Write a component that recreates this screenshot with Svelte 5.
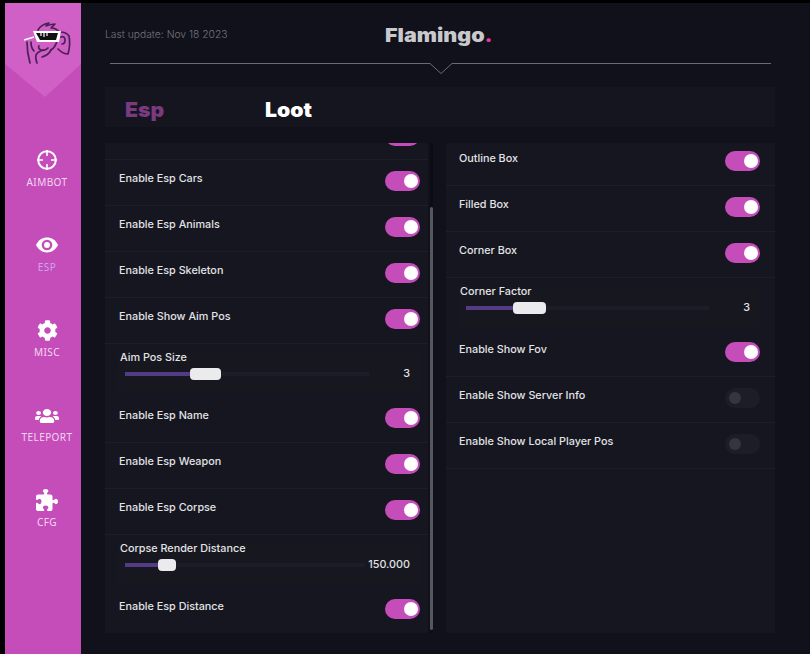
<script>
  const nav = [
    { id: 'aim', label: 'AIMBOT' },
    { id: 'eye', label: 'ESP', active: true },
    { id: 'cog', label: 'MISC' },
    { id: 'users', label: 'TELEPORT' },
    { id: 'puzzle', label: 'CFG' }
  ];
  const left = [
    { partial: true },
    { label: 'Enable Esp Cars', on: true },
    { label: 'Enable Esp Animals', on: true },
    { label: 'Enable Esp Skeleton', on: true },
    { label: 'Enable Show Aim Pos', on: true },
    { slider: true, label: 'Aim Pos Size', value: '3', thumbLeft: 65, thumbW: 31 },
    { label: 'Enable Esp Name', on: true },
    { label: 'Enable Esp Weapon', on: true },
    { label: 'Enable Esp Corpse', on: true },
    { slider: true, label: 'Corpse Render Distance', value: '150.000', thumbLeft: 33, thumbW: 18 },
    { label: 'Enable Esp Distance', on: true, last: true }
  ];
  const right = [
    { label: 'Outline Box', on: true },
    { label: 'Filled Box', on: true },
    { label: 'Corner Box', on: true },
    { slider: true, label: 'Corner Factor', value: '3', thumbLeft: 47, thumbW: 33 },
    { label: 'Enable Show Fov', on: true },
    { label: 'Enable Show Server Info', on: false },
    { label: 'Enable Show Local Player Pos', on: false }
  ];
</script>

{#snippet rowItem(r)}
  {#if r.partial}
    <div class="row partial"><span class="toggle on"><i></i></span></div>
  {:else if r.slider}
    <div class="sliderRow">
      <div class="sliderBox">
        <div class="sliderLabel">{r.label}</div>
        <div class="sliderLine">
          <div class="track">
            <div class="fill" style="width:{r.thumbLeft + 4}px"></div>
            <div class="thumb" style="left:{r.thumbLeft}px;width:{r.thumbW}px"></div>
          </div>
          <span class="value">{r.value}</span>
        </div>
      </div>
    </div>
  {:else}
    <div class="row" class:last={r.last}>
      <span class="label">{r.label}</span>
      <span class="toggle" class:on={r.on}><i></i></span>
    </div>
  {/if}
{/snippet}

<div class="window">
  <aside class="sidebar">
    <div class="logo">
      <svg class="banner" width="76" height="94" viewBox="0 0 76 94"><polygon points="0,0 76,0 76,61 40,94 0,61" fill="#d05fc6"/></svg>
      <svg class="face" width="76" height="70" viewBox="0 0 76 70" fill="none">
        <g stroke="#4b2157" stroke-width="1.7" stroke-linecap="round" stroke-linejoin="round">
          <path d="M33 27c2-4 6-6 11-7l-3 3c3-1 6-2 9-2l-4 4c4 0 7 2 9 5"/>
          <path d="M22 39c0 7 1 14 3 21"/>
          <path d="M26 39c0 4 1 7 3 9"/>
          <path d="M55 29c3 0 7 1 9 4 1 5 1 11-1 18-3 0-7-2-10-5"/>
          <path d="M56 34c2-1 4 0 4 3 0 3-1 4-3 4"/>
          <path d="M52 38c-1 4-3 7-6 9"/>
          <path d="M34 43c-1 2 0 3 2 4 3 1 5 0 7-2"/>
          <path d="M38 47c-3 1-6 3-7 5-1 3 0 5 1 8"/>
          <path d="M46 47c-2 4-5 6-9 7"/>
        </g>
        <path d="M19 37l10-3" stroke="#fff" stroke-width="1.5"/>
        <polygon points="28,28 56,28 54,39 32,39" fill="#fff"/>
        <polygon points="31,30 53,30 51,37 35,37" fill="#111"/>
        <path d="M36 30v3M39 30v4M42 30v3" stroke="#fff" stroke-width="1.2"/>
      </svg>
    </div>
    <nav>
      {#each nav as n}
        <div class="navItem" class:active={n.active}>
          <div class="icon">
            {#if n.id === 'aim'}
              <svg width="22" height="22" viewBox="0 0 22 22" fill="none" stroke="#fff">
                <circle cx="11" cy="11" r="8.8" stroke-width="2"/>
                <path d="M11 1v6M11 15v6M1 11h6M15 11h6" stroke-width="1.6"/>
              </svg>
            {:else if n.id === 'eye'}
              <svg width="22" height="16" viewBox="0 0 22 16">
                <path fill="#fff" d="M0 8C2.500 3 6.500 .6 11 .6S19.500 3 22 8c-2.500 5-6.500 7.400-11 7.400S2.500 13 0 8z"/>
                <circle cx="11" cy="8" r="5.300" fill="#c44dba"/>
                <circle cx="11" cy="8" r="3" fill="#fff"/>
              </svg>
            {:else if n.id === 'cog'}
              <svg width="21" height="21" viewBox="0 0 512 512"><path fill="#fff" d="M487.4 315.7l-42.6-24.6c4.3-23.2 4.3-47 0-70.2l42.6-24.6c4.9-2.8 7.1-8.6 5.5-14-11.1-35.6-30-67.8-54.7-94.6-3.8-4.1-10-5.1-14.8-2.3L380.8 110c-17.9-15.4-38.5-27.3-60.8-35.1V25.8c0-5.6-3.9-10.5-9.4-11.7-36.7-8.2-74.3-7.8-109.2 0-5.5 1.2-9.4 6.1-9.4 11.7V75c-22.2 7.9-42.8 19.8-60.8 35.1L88.7 85.5c-4.9-2.8-11-1.9-14.8 2.3-24.7 26.7-43.6 58.9-54.7 94.6-1.7 5.4.6 11.2 5.5 14L67.3 221c-4.3 23.2-4.3 47 0 70.2l-42.6 24.6c-4.9 2.8-7.1 8.6-5.5 14 11.1 35.6 30 67.8 54.7 94.6 3.8 4.1 10 5.1 14.8 2.3l42.6-24.6c17.9 15.4 38.5 27.3 60.8 35.1v49.2c0 5.6 3.9 10.5 9.4 11.7 36.7 8.2 74.3 7.8 109.2 0 5.5-1.2 9.4-6.1 9.4-11.7v-49.2c22.2-7.9 42.8-19.8 60.8-35.1l42.6 24.6c4.9 2.8 11 1.9 14.8-2.3 24.7-26.7 43.6-58.9 54.7-94.6 1.5-5.500-.7-11.300-5.600-14.100zM256 336c-44.100 0-80-35.900-80-80s35.900-80 80-80 80 35.900 80 80-35.900 80-80 80z"/></svg>
            {:else if n.id === 'users'}
              <svg class="usersIcon" width="24" height="16" viewBox="0 0 640 512" preserveAspectRatio="none"><path fill="#fff" d="M96 224c35.300 0 64-28.700 64-64s-28.700-64-64-64-64 28.700-64 64 28.700 64 64 64zm448 0c35.300 0 64-28.700 64-64s-28.700-64-64-64-64 28.700-64 64 28.700 64 64 64zm32 32h-64c-17.600 0-33.500 7.100-45.100 18.600 40.300 22.100 68.900 62 75.100 109.400h66c17.700 0 32-14.300 32-32v-32c0-35.300-28.700-64-64-64zm-256 0c61.900 0 112-50.100 112-112S381.900 32 320 32 208 82.100 208 144s50.100 112 112 112zm76.800 32h-8.300c-20.800 10-43.900 16-68.500 16s-47.600-6-68.500-16h-8.300C179.600 288 128 339.600 128 403.200V432c0 26.500 21.500 48 48 48h288c26.500 0 48-21.500 48-48v-28.800c0-63.600-51.600-115.200-115.200-115.200zm-223.700-13.400C161.500 263.100 145.600 256 128 256H64c-35.300 0-64 28.700-64 64v32c0 17.700 14.300 32 32 32h65.900c6.300-47.400 34.900-87.300 75.200-109.400z"/></svg>
            {:else}
              <svg width="22" height="22" viewBox="0 0 512 512"><path fill="#fff" d="M192 104.8c0-9.2-5.8-17.3-13.200-22.800C167.200 73.300 160 61.300 160 48c0-26.500 28.700-48 64-48s64 21.500 64 48c0 13.300-7.200 25.300-18.800 34-7.400 5.500-13.200 13.600-13.200 22.800 0 12.800 10.400 23.200 23.200 23.200H336c26.500 0 48 21.500 48 48v56.800c0 12.800 10.400 23.200 23.200 23.200 9.200 0 17.300-5.800 22.800-13.200 8.700-11.600 20.700-18.800 34-18.800 26.500 0 48 28.700 48 64s-21.500 64-48 64c-13.300 0-25.300-7.200-34-18.800-5.500-7.400-13.600-13.200-22.800-13.200-12.800 0-23.200 10.400-23.200 23.200V464c0 26.500-21.500 48-48 48H279.200c-12.800 0-23.200-10.400-23.200-23.200 0-9.200 5.800-17.300 13.200-22.800 11.600-8.700 18.800-20.700 18.800-34 0-26.500-28.700-48-64-48s-64 21.500-64 48c0 13.300 7.200 25.300 18.800 34 7.400 5.500 13.200 13.600 13.200 22.800 0 12.800-10.400 23.200-23.200 23.200H48c-26.500 0-48-21.500-48-48V343.200C0 330.400 10.400 320 23.200 320c9.200 0 17.300 5.800 22.800 13.200 8.700 11.600 20.700 18.800 34 18.800 26.500 0 48-28.700 48-64s-21.500-64-48-64c-13.300 0-25.300 7.200-34 18.800-5.500 7.400-13.600 13.200-22.800 13.200C10.400 256 0 245.600 0 232.800V176c0-26.500 21.500-48 48-48h120.800c12.800 0 23.200-10.400 23.200-23.200z"/></svg>
            {/if}
          </div>
          <div class="navLabel">{n.label}</div>
        </div>
      {/each}
    </nav>
  </aside>

  <main>
    <header>
      <span class="update">Last update: Nov 18 2023</span>
      <span class="brand">Flamingo<b>.</b></span>
    </header>
    <svg class="rule" width="661" height="12" viewBox="0 0 661 12" fill="none"><path d="M0 .5H320L331 10.500 342 .5H661" stroke="#6a6b74"/></svg>
    <div class="tabs">
      <span class="tab esp">Esp</span>
      <span class="tab loot">Loot</span>
    </div>
    <div class="columns">
      <div class="leftCol">
        <section class="panel">
          {#each left as r}{@render rowItem(r)}{/each}
        </section>
        <div class="scrollbar"><div class="scrollThumb"></div></div>
      </div>
      <section class="panel rightPanel">
        {#each right as r}{@render rowItem(r)}{/each}
      </section>
    </div>
  </main>
</div>

<style>
  :global(body) { margin: 0; background: #000; }
  .window {
    width: 810px; height: 654px; box-sizing: border-box; padding: 3px 0 0 5px;
    display: flex; background: #000; overflow: hidden;
    font-family: Inter, "Liberation Sans", sans-serif;
  }
  .sidebar { width: 76px; flex: none; background: #c44dba; display: flex; flex-direction: column; }
  .logo { height: 94px; position: relative; flex: none; }
  .banner { position: absolute; inset: 0; }
  .face { position: absolute; left: 0; top: 0; }
  nav { display: flex; flex-direction: column; padding: 52px 0 0 8px; }
  .navItem { height: 85px; display: flex; flex-direction: column; align-items: center; }
  .icon { height: 22px; display: flex; align-items: center; justify-content: center; }
  .usersIcon { margin-top: 2px; }
  .navLabel {
    margin-top: 5px; font: 400 10px/12px "Noto Sans", Inter, sans-serif; color: #f4d6f1; letter-spacing: .4px; white-space: nowrap;
  }
  .active .navLabel { color: #cfa4ee; }
  main { flex: 1; background: #10111a; padding-left: 24px; min-width: 0; }
  header { height: 60px; position: relative; flex: none; }
  .update { position: absolute; left: 0; top: 25px; font: 300 10.300px/12px Inter, sans-serif; color: #74757d; white-space: nowrap; }
  .brand {
    position: absolute; left: 280px; top: 20px; font: 900 19px/26px Inter, sans-serif; color: #c9c9cd;
    transform: scaleX(1.13); transform-origin: left center; white-space: nowrap;
  }
  .brand b { color: #dc3d9f; font-weight: 900; }
  .rule { display: block; margin-left: 5px; }
  .tabs {
    margin-top: 12px; width: 670px; height: 40px; background: #14151e; display: flex; align-items: center;
    font: 900 20px/24px Inter, sans-serif; padding-top: 6px; box-sizing: border-box;
  }
  .tab { display: inline-block; transform: scaleX(1.06); transform-origin: left center; }
  .tab.esp { margin-left: 20px; width: 140px; color: #7a3a80; }
  .tab.loot { color: #fff; }
  .columns { display: flex; margin-top: 16px; }
  .leftCol { display: flex; width: 341px; }
  .panel { background: #15161f; height: 490px; overflow: hidden; }
  .leftCol .panel { width: 323px; }
  .scrollbar { width: 3px; margin-left: 2px; height: 490px; background: #0c0d13; flex: none; display: flex; flex-direction: column; justify-content: flex-end; }
  .scrollThumb { height: 423px; margin-bottom: 3px; background: #55565e; border-radius: 2px; }
  .rightPanel { width: 329px; }
  .row {
    height: 46px; box-sizing: border-box; padding: 11px 8px 0 14px;
    display: flex; justify-content: space-between; align-items: flex-start;
    border-bottom: 1px solid #1d1e28;
  }
  .rightPanel .row { padding-right: 15px; padding-left: 13px; }
  .rightPanel .row:first-child { height: 43px; padding-top: 8px; }
  .row.partial { height: 17px; padding-top: 0; justify-content: flex-end; }
  .row.partial .toggle { margin-top: -17px; }
  .row.last { border-bottom: 0; }
  .label { font: 500 10.800px/14px Inter, sans-serif; color: #e3e3e6; margin-top: 1px; }
  .toggle { width: 35px; height: 20px; border-radius: 10px; background: #1c1d26; position: relative; display: block; flex: none; }
  .toggle.on { background: #c44dba; }
  .toggle i { position: absolute; top: 4px; left: 4px; width: 12px; height: 12px; border-radius: 50%; background: #34353e; }
  .toggle.on i { left: auto; right: 2px; top: 3px; width: 14px; height: 14px; background: #fff; }
  .sliderRow { height: 53px; box-sizing: border-box; padding: 9px 8px 3px 13px; }
  .rightPanel .sliderRow { padding: 9px 15px 3px 12px; }
  .sliderBox { height: 40px; background: #17181f; padding: 0 10px 0 2px; box-sizing: border-box; }
  .sliderLabel { font: 500 10.800px/14px Inter, sans-serif; color: #e3e3e6; position: relative; top: -2px; height: 14px; }
  .sliderLine { display: flex; align-items: center; padding-left: 5px; }
  .rightPanel .sliderLine { padding-left: 6px; }
  .track { flex: 1; height: 4px; background: #1c1d27; position: relative; }
  .fill { position: absolute; left: 0; top: 0; bottom: 0; background: #533c85; }
  .thumb { position: absolute; top: -4px; height: 12px; background: #ebebee; border-radius: 4px; }
  .value { margin-left: 3px; min-width: 38px; text-align: right; font: 500 10.800px/14px Inter, sans-serif; color: #e3e3e6; }
</style>
